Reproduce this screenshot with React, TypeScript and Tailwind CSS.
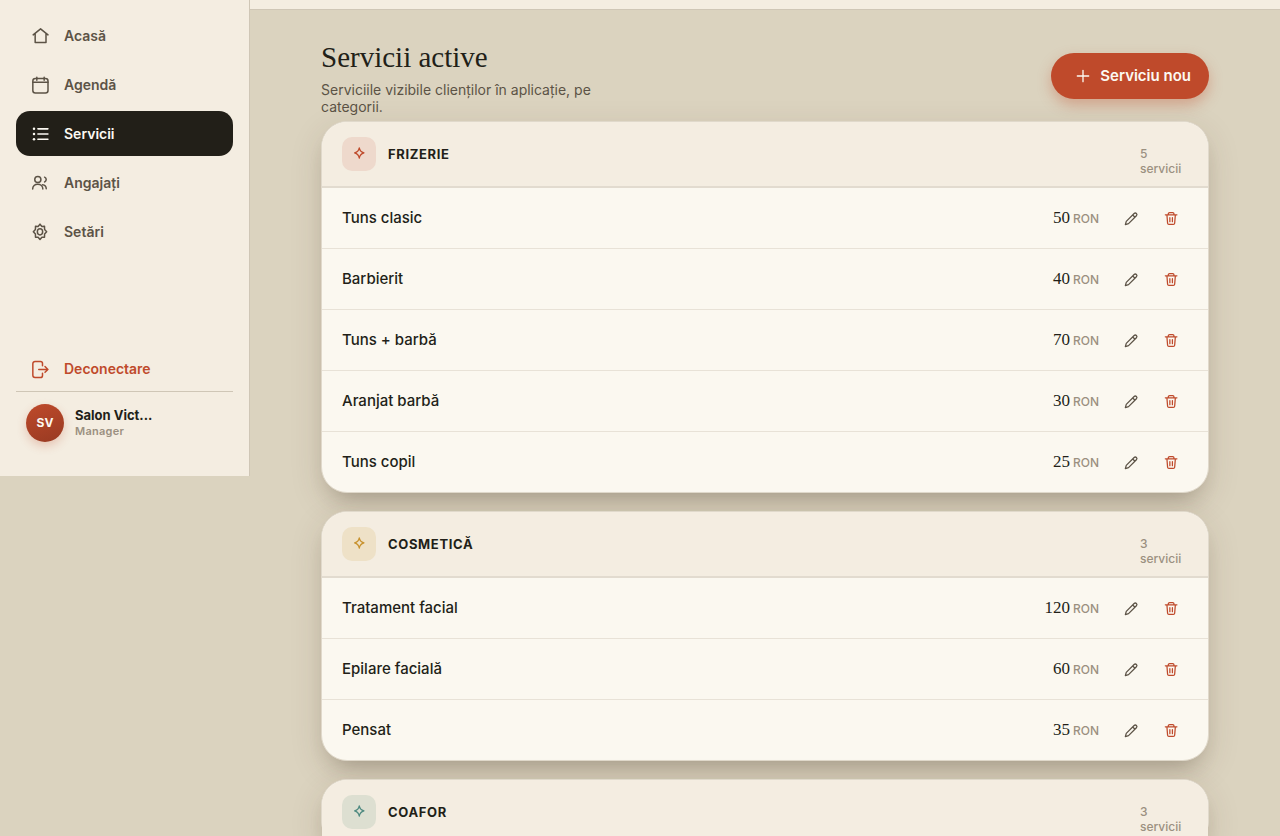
import type { ReactNode } from "react";

function Icon({ size, sw = 1.8, children }: { size: number; sw?: number; children: ReactNode }) {
  return (
    <svg
      width={size}
      height={size}
      viewBox="0 0 24 24"
      fill="none"
      stroke="currentColor"
      strokeWidth={sw}
      strokeLinecap="round"
      strokeLinejoin="round"
      aria-hidden="true"
      className="shrink-0"
    >
      {children}
    </svg>
  );
}

const icons = {
  home: (
    <Icon size={20}>
      <path d="M3.800 10.600 12.700 3.400l8.900 7.200M6.200 9v10.900h13V9" />
    </Icon>
  ),
  calendar: (
    <Icon size={20}>
      <rect x="3.400" y="4.200" width="18.200" height="17.400" rx="3" />
      <path d="M3.400 8.700h18.200M8.200 2.800v3.400M17 2.800v3.400" />
    </Icon>
  ),
  list: (
    <Icon size={20} sw={1.9}>
      <path d="M9.500 5.800h12M9.500 12h12M9.500 18.200h12" />
      <g fill="currentColor" stroke="none">
        <circle cx="4.800" cy="5.800" r="1.500" />
        <circle cx="4.800" cy="12" r="1.500" />
        <circle cx="4.800" cy="18.200" r="1.500" />
      </g>
    </Icon>
  ),
  people: (
    <Icon size={20}>
      <circle cx="9.400" cy="7.800" r="3.700" />
      <path d="M3.200 19.300c0-3.600 2.600-5.800 6-5.800s6.200 2.200 6.200 5.800M17.500 5c2.600 1.200 2.600 4.600 0 5.800M15 14c2.900.2 4.500 2.200 4.500 5" />
    </Icon>
  ),
  settings: (
    <Icon size={20}>
      <ellipse cx="12" cy="11.800" rx="3.200" ry="3.700" />
      <path d="M12 2.600 14.300 5.300 17.400 5.200 17.500 9.100 20 11.800 17.500 14.500 17.400 18.300 14.300 18.300 12 21 9.700 18.300 6.600 18.300 6.500 14.500 4 11.800 6.500 9.100 6.600 5.200 9.700 5.300z" />
    </Icon>
  ),
  logout: (
    <Icon size={20}>
      <path d="M15 8V5.500A2.500 2.500 0 0 0 12.500 3H6a2.600 2.600 0 0 0-2.600 2.600v14A2.600 2.600 0 0 0 6 22.200h6.500a2.500 2.500 0 0 0 2.500-2.500V17M10.500 12.500h11M18 9l3.500 3.500L18 16" />
    </Icon>
  ),
};

const nav = [
  { label: "Acasă", icon: icons.home },
  { label: "Agendă", icon: icons.calendar },
  { label: "Servicii", icon: icons.list, active: true },
  { label: "Angajați", icon: icons.people },
  { label: "Setări", icon: icons.settings },
];

type Category = { name: string; tone: string; count: number; services: { name: string; price: number }[] };

const categories: Category[] = [
  {
    name: "Frizerie",
    tone: "bg-[#eed9cc] text-[#bf4a2b]",
    count: 5,
    services: [
      { name: "Tuns clasic", price: 50 },
      { name: "Barbierit", price: 40 },
      { name: "Tuns + barbă", price: 70 },
      { name: "Aranjat barbă", price: 30 },
      { name: "Tuns copil", price: 25 },
    ],
  },
  {
    name: "Cosmetică",
    tone: "bg-[#eee1c7] text-[#c8922e]",
    count: 3,
    services: [
      { name: "Tratament facial", price: 120 },
      { name: "Epilare facială", price: 60 },
      { name: "Pensat", price: 35 },
    ],
  },
  { name: "Coafor", tone: "bg-[#dddfd1] text-[#4f8a80]", count: 3, services: [] },
];

function Sidebar() {
  return (
    <aside className="flex w-[250px] shrink-0 flex-col self-start border-r border-[#cfc6b6] bg-[#f4ede1] px-4 pt-[13px] pb-[34px]">
      <nav className="flex flex-col gap-1">
        {nav.map((item) => (
          <a
            key={item.label}
            href="#"
            aria-current={item.active ? "page" : undefined}
            className={
              item.active
                ? "flex h-[45px] items-center gap-3.5 rounded-[14px] bg-[#221f18] px-3.5 text-sm font-semibold text-[#fcf9f2]"
                : "flex h-[45px] items-center gap-3.5 rounded-[14px] px-3.5 text-sm font-semibold text-[#5c5346]"
            }
          >
            {item.icon}
            {item.label}
          </a>
        ))}
      </nav>
      <button
        type="button"
        className="mt-[92px] flex h-[45px] items-center gap-3.5 px-3.5 text-sm font-semibold text-[#bf4a2b]"
      >
        {icons.logout}
        Deconectare
      </button>
      <div className="flex items-center gap-[11px] border-t border-[#cfc6b6] px-2.5 pt-3">
        <div className="flex size-[38px] shrink-0 items-center justify-center rounded-full bg-linear-160 from-[#bf4a2b] to-[#983a22] text-xs font-bold text-[#fcf9f2] shadow-[0_4px_10px_rgba(191,74,43,0.25)]">
          SV
        </div>
        <div>
          <p className="text-[13px] leading-4 font-bold whitespace-nowrap text-[#221f18]">Salon Vict...</p>
          <p className="text-[11px] leading-4 font-semibold tracking-wide text-[#9b9080]">Manager</p>
        </div>
      </div>
    </aside>
  );
}

function ServiceRow({ name, price }: { name: string; price: number }) {
  return (
    <li className="flex h-[61px] items-center border-b border-[#e8e2d7] pr-[17px] pl-5 last:h-[60px] last:border-b-0">
      <span className="flex-1 text-[15px] font-medium text-[#221f18]">{name}</span>
      <span className="mr-3 flex items-baseline gap-[3px]">
        <span className="font-['Liberation_Serif',serif] text-[17px] text-[#221f18]">{price}</span>
        <span className="text-xs font-medium text-[#9b9080]">RON</span>
      </span>
      <button
        type="button"
        aria-label={`Editează ${name}`}
        className="flex size-10 items-center justify-center text-[#5c5346]"
      >
        <Icon size={16} sw={1.9}>
          <path d="m3.500 22 1.400-4.900L16.700 5.300a2.300 2.300 0 0 1 3.400 3.400L8.300 20.500zM14.600 7.400l3.400 3.400" />
        </Icon>
      </button>
      <button
        type="button"
        aria-label={`Șterge ${name}`}
        className="flex size-10 items-center justify-center text-[#bf4a2b]"
      >
        <Icon size={16} sw={1.9}>
          <path d="M3.500 7.200h17.400M8 7V5.700c0-1 .8-1.700 1.800-1.700h4.800c1 0 1.800.7 1.800 1.700V7M5.900 7.500l1 12.300a2 2 0 0 0 2 1.800h6.600a2 2 0 0 0 2-1.800l1-12.300M10.300 11.500v6M14.100 11.500v6" />
        </Icon>
      </button>
    </li>
  );
}

export default function App() {
  return (
    <div className="flex h-screen bg-[#dbd3bf] font-[Inter,sans-serif] text-[#221f18]">
      <Sidebar />
      <main className="min-w-0 flex-1 overflow-y-auto [scrollbar-width:none]">
        <div className="h-2.5 border-b border-[#cfc6b6] bg-[#f4ede1]" />
        <div className="mx-auto max-w-[888px] pt-[30px]">
          <header className="flex items-start justify-between">
            <div className="h-[81px] w-[280px]">
              <h1 className="font-['Liberation_Serif',serif] text-[29px] leading-[34px]">Servicii active</h1>
              <p className="mt-[7px] text-sm leading-[17px] text-[#5c5346]">
                Serviciile vizibile clienților în aplicație, pe categorii.
              </p>
            </div>
            <button
              type="button"
              className="mt-[13px] flex h-[46px] items-center gap-[9px] rounded-full bg-[#bf4a2b] pr-[18px] pl-6 text-[15px] font-semibold text-[#fcf9f2] shadow-[0_6px_14px_rgba(191,74,43,0.35)]"
            >
              <Icon size={16} sw={2}>
                <path d="M12 3.500v17M3.500 12h17" />
              </Icon>
              Serviciu nou
            </button>
          </header>
          <div className="flex flex-col gap-[18px]">
            {categories.map((c) => (
              <section
                key={c.name}
                className="rounded-[26px] border border-[#e0d9cb] bg-[#fbf8f0] shadow-[0_10px_32px_rgba(80,55,35,0.15),0_14px_22px_-12px_rgba(60,50,35,0.3)]"
              >
                <div className="flex h-[66px] items-center rounded-t-[25px] border-b-2 border-[#e2dbcf] bg-[#f4ede1] px-5">
                  <div className={`flex size-[34px] items-center justify-center rounded-[10px] ${c.tone}`}>
                    <Icon size={14} sw={2.2}>
                      <path d="M12.500 1.500c.8 4.800 3.200 7.300 8 8.500-4.800 1.200-7.200 4.200-8 9-.8-4.800-3.200-7.800-8-9 4.800-1.200 7.200-3.700 8-8.500z" />
                    </Icon>
                  </div>
                  <h2 className="ml-3 flex-1 pt-0.5 text-[13px] font-bold tracking-wider uppercase">{c.name}</h2>
                  <p className="mt-3.5 w-12 text-xs leading-[15px] font-medium text-[#9b9080]">{c.count} servicii</p>
                </div>
                <ul>
                  {c.services.map((s) => (
                    <ServiceRow key={s.name} name={s.name} price={s.price} />
                  ))}
                </ul>
              </section>
            ))}
          </div>
        </div>
      </main>
    </div>
  );
}
